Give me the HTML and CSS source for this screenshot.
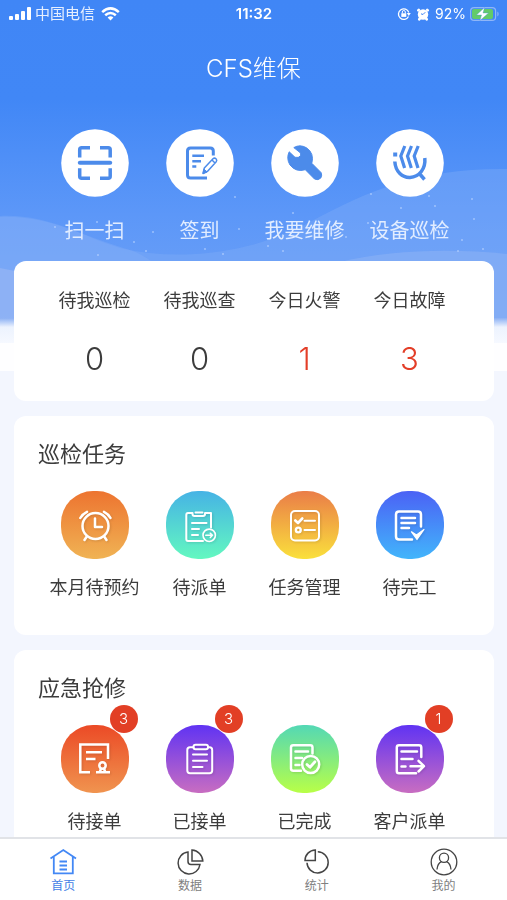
FILE: index.html
```html
<!DOCTYPE html>
<html lang="zh-CN">
<head>
<meta charset="utf-8">
<meta name="viewport" content="width=device-width, initial-scale=1">
<title>CFS维保</title>
<link rel="stylesheet" href="styles.css">
</head>
<body>
<div class="app">
  <main class="content">
    <svg class="scenery" viewBox="0 0 507 372" preserveAspectRatio="none" aria-hidden="true">
      <defs>
        <linearGradient id="sky" x1="0" y1="0" x2="0" y2="1">
          <stop offset="0" stop-color="#4086f6"/>
          <stop offset=".3" stop-color="#4187f6"/>
          <stop offset=".65" stop-color="#5c97f8"/>
          <stop offset="1" stop-color="#72a3f5"/>
        </linearGradient>
        <linearGradient id="snow" x1="0" y1="0" x2="0" y2="1">
          <stop offset="0" stop-color="#8bb0f4"/>
          <stop offset=".35" stop-color="#edf3fe"/>
          <stop offset="1" stop-color="#f6f9ff"/>
        </linearGradient>
      </defs>
      <rect width="507" height="330" fill="url(#sky)"/>
      <path d="M0 216C50 214 80 236 120 248C180 262 250 254 310 222C370 190 420 168 507 169V330H0Z" fill="#7facf7" fill-opacity=".4"/>
      <path d="M0 217C50 215 80 236 130 250C160 260 180 290 220 330H0Z" fill="#8ab2f7" fill-opacity=".3"/>
      <path d="M340 262C390 250 450 248 507 254V330H340Z" fill="#8ab0f5" fill-opacity=".6"/>
      <path d="M0 268L40 276V330H0Z" fill="#96b5f3" fill-opacity=".7"/>
      <rect y="318" width="507" height="26" fill="url(#snow)"/>
      <rect y="343" width="507" height="28" fill="#fefeff"/>
      <g fill="#c4dafd" fill-opacity=".6">
        <circle cx="55" cy="227" r="1"/><circle cx="97" cy="222" r="1"/><circle cx="134" cy="242" r="1"/><circle cx="146" cy="251" r="1"/><circle cx="98" cy="255" r="1"/>
        <circle cx="153" cy="232" r="1"/><circle cx="205" cy="249" r="1"/><circle cx="223" cy="254" r="1"/><circle cx="235" cy="197" r="1"/><circle cx="239" cy="229" r="1"/>
        <circle cx="268" cy="246" r="1"/><circle cx="283" cy="251" r="1"/><circle cx="293" cy="213" r="1"/><circle cx="346" cy="237" r="1"/><circle cx="371" cy="194" r="1"/>
        <circle cx="401" cy="208" r="1"/><circle cx="429" cy="196" r="1"/><circle cx="435" cy="206" r="1"/><circle cx="472" cy="199" r="1"/><circle cx="474" cy="219" r="1"/>
        <circle cx="462" cy="240" r="1"/><circle cx="458" cy="251" r="1"/><circle cx="483" cy="249" r="1"/><circle cx="368" cy="223" r="1"/>
      </g>
    </svg>

    <div class="status-bar">
      <div class="status-left">
        <svg width="22" height="14" viewBox="0 0 22 14" fill="#fff" aria-hidden="true"><rect y="9" width="4" height="4" rx="1"/><rect x="6" y="7" width="4" height="6" rx="1"/><rect x="12" y="4" width="4" height="9" rx="1"/><rect x="18" width="4" height="13" rx="1"/></svg>
        <span>中国电信</span>
        <svg class="wifi" width="19" height="14" viewBox="0 0 19 14" aria-hidden="true"><path d="M1.200 5.200Q9.500-2.400 17.800 5.200M4.200 8.300Q9.500 3.600 14.800 8.300" fill="none" stroke="#fff" stroke-width="2.500"/><path d="M6.600 10.500Q9.500 8 12.400 10.500L9.500 13.500Z" fill="#fff"/></svg>
      </div>
      <time class="status-time">11:32</time>
      <div class="status-right">
        <svg width="14" height="14" viewBox="0 0 14 14" fill="none" stroke="#fff" aria-hidden="true"><path d="M11.500 9.500A5.300 5.300 0 1 1 11.800 5.500" stroke-width="1.300"/><path d="M9.800 6h4L11.800 9Z" fill="#fff" stroke="none"/><rect x="4.300" y="6.300" width="5" height="3.600" fill="#fff" stroke="none"/><path d="M5.300 6.500V5a1.500 1.500 0 0 1 3 0v1.500"/></svg>
        <svg width="12" height="14" viewBox="0 0 12 14" aria-hidden="true"><path d="M1.800 2.800L1.300 3.300M10.200 2.800L10.700 3.300M2.800 11.500L2.300 12.300M9.200 11.500L9.700 12.300" stroke="#fff" stroke-width="2.600" stroke-linecap="round"/><circle cx="6" cy="7.500" r="5.200" fill="#fff"/><path d="M6 7.500L8.300 5.200M6 7.500L4 6.800" stroke="#4086f6"/></svg>
        <span>92%</span>
        <svg class="battery" width="29" height="14" viewBox="0 0 29 14" aria-hidden="true"><rect x=".6" y=".6" width="25" height="12.800" rx="3.500" fill="none" stroke="#8fb6f8" stroke-width="1.200"/><path d="M27.300 4.500v5q1.400-.8 1.400-2.500t-1.400-2.500Z" fill="#8fb6f8"/><rect x="2" y="2" width="21" height="10" rx="2" fill="#63cb69"/><path d="M14.500.5L6.500 8h5L10 13.500L18.500 6h-5.500Z" fill="#fff" stroke="#4f94dd" stroke-width=".4"/></svg>
      </div>
    </div>

    <h1 class="page-title">CFS维保</h1>

    <nav class="quick grid" aria-label="快捷功能">
      <a class="item" href="#scan">
        <svg class="icon" viewBox="0 0 68 68" fill="none" stroke="#4c8bea" stroke-width="3.500" aria-hidden="true"><circle cx="34" cy="34" r="33.800" fill="#fff" stroke="none"/><path d="M29 18.700H20.700Q18.700 18.700 18.700 20.700V28.500M39 18.700H47.200Q49.200 18.700 49.200 20.700V28.500M29 49.200H20.700Q18.700 49.200 18.700 47.200V39.300M39 49.200H47.200Q49.200 49.200 49.200 47.200V39.300"/><path d="M18.800 33.800H49.200" stroke-width="4" stroke-linecap="round"/></svg>
        <span>扫一扫</span>
      </a>
      <a class="item" href="#sign">
        <svg class="icon" viewBox="0 0 68 68" fill="none" stroke="#4c8bea" aria-hidden="true"><circle cx="34" cy="34" r="33.800" fill="#fff" stroke="none"/><path d="M47.300 26.500V22Q47.300 19 44.300 19H24.500Q21.500 19 21.500 22V46Q21.500 49 24.500 49H41" stroke-width="3"/><path d="M26.300 26.800H38M26.300 32.200H35M26.300 37.500H30.300" stroke-width="2.400"/><path d="M37 44.500L38.300 39L47 29.800Q48.500 28.500 50 29.800Q51.400 31.200 50.200 32.700L41.600 42.300ZM46 31L49 34" stroke-width="1.500" stroke-linejoin="round"/><path d="M37 44.500L38 40L41 43Z" fill="#4c8bea"/></svg>
        <span>签到</span>
      </a>
      <a class="item" href="#repair">
        <svg class="icon" viewBox="0 0 68 68" aria-hidden="true"><circle cx="34" cy="34" r="33.800" fill="#fff"/><path d="M22.800 18.600Q29 15 35.500 18.800Q43.500 24.300 40.800 34.300L50 43.500Q51.500 46 49.800 49Q47.200 51.800 43.500 50L34.300 40.700Q25 43.500 19 36Q15 29.500 18.200 22.800L24 28.300Q27.800 29.200 29.500 26.800Q30.300 24.700 28.700 23.300Z" fill="#4c8bea" stroke="#4c8bea" stroke-linejoin="round"/></svg>
        <span>我要维修</span>
      </a>
      <a class="item" href="#device">
        <svg class="icon" viewBox="0 0 68 68" fill="none" stroke="#4c8bea" stroke-width="3.500" aria-hidden="true"><circle cx="34" cy="34" r="33.800" fill="#fff" stroke="none"/><path d="M18.800 32.500C19.500 43 26.500 48.800 34 48.500C43.500 48 49.800 39.500 48.800 29M42.500 43.500L48.500 50.500"/><path d="M28.800 17L24.800 27L28.600 39M35.500 17L31.500 27L35.300 39M42.200 17L38.200 27L42 39" stroke-width="3.200"/><rect x="17.200" y="23.500" width="4" height="4" fill="#4c8bea" stroke="none"/></svg>
        <span>设备巡检</span>
      </a>
    </nav>

    <section class="card stats" aria-label="今日概况">
      <dl class="grid">
        <div class="stat"><dt>待我巡检</dt><dd>0</dd></div>
        <div class="stat"><dt>待我巡查</dt><dd>0</dd></div>
        <div class="stat alert"><dt>今日火警</dt><dd>1</dd></div>
        <div class="stat alert"><dt>今日故障</dt><dd>3</dd></div>
      </dl>
    </section>

    <section class="card tasks">
      <h2>巡检任务</h2>
      <div class="grid">
        <a class="item" href="#booking">
          <span class="disc amber"><svg class="icon line" viewBox="0 0 68 68" aria-hidden="true"><circle cx="34.500" cy="35" r="13"/><path d="M34 27.500V36H41M19.300 27Q21.500 23 26 20.800M43 20.800Q47.500 23 49.500 27M25.800 45.500L23.500 49M43.200 45.500L45.500 49"/></svg></span>
          <span>本月待预约</span>
        </a>
        <a class="item" href="#dispatch">
          <span class="disc aqua"><svg class="icon line thin" viewBox="0 0 68 68" aria-hidden="true"><path d="M45 36.500V22H39V23Q39 25 37 25H28.500Q26.500 25 26.500 23V22H22Q20.300 22 20.300 24V48Q20.300 50 22 50H37M29.500 21.500H36.500M26 32H40.500M26 38H33M26 44H32"/><circle cx="43.200" cy="44.300" r="6.200" stroke-width="1.600"/><path d="M39.800 44.300H46.500M44.300 42.200L46.500 44.300L44.300 46.500" stroke-width="1.500"/></svg></span>
          <span>待派单</span>
        </a>
        <a class="item" href="#manage">
          <span class="disc gold"><svg class="icon line thin" viewBox="0 0 68 68" aria-hidden="true"><rect x="20" y="20" width="28" height="29.500" rx="4"/><path d="M33.500 29.800H44M33.500 39H44"/><path d="M24.300 29.500L27 32L31.300 27.500" stroke-width="2.600"/><circle cx="27.300" cy="39" r="2.400" stroke-width="2.400"/></svg></span>
          <span>任务管理</span>
        </a>
        <a class="item" href="#finish">
          <span class="disc azure"><svg class="icon line" viewBox="0 0 68 68" aria-hidden="true"><path d="M45 35.500V23.500Q45 20.500 42 20.500H23Q20 20.500 20 23.500V45.500Q20 48.500 23 48.500H36M25.500 27H39M25.500 32H39M25.500 37H33"/><path d="M35.500 40.800L40.500 44L48 38.500L41 48.500Z" fill="#fff" stroke-width="1.200"/></svg></span>
          <span>待完工</span>
        </a>
      </div>
    </section>

    <section class="card tasks">
      <h2>应急抢修</h2>
      <div class="grid">
        <a class="item" href="#pending">
          <span class="disc coral"><svg class="icon line square" viewBox="0 0 68 68" aria-hidden="true"><path d="M47 34V19.500H19.300V47.300H29M25 27.300H41M25 34H34.500"/><path d="M35 47.300H49M40 43.500L39 46.500M43 43.500L44 46.500"/><circle cx="41.500" cy="40.500" r="3.200"/></svg><b class="badge">3</b></span>
          <span>待接单</span>
        </a>
        <a class="item" href="#accepted">
          <span class="disc violet"><svg class="icon line thin" viewBox="0 0 68 68" aria-hidden="true"><path d="M27.500 22.300H24Q21.300 22.300 21.300 25V45.500Q21.300 48.200 24 48.200H43.500Q46.200 48.200 46.200 45.500V25Q46.200 22.300 43.500 22.300H42"/><rect x="27.500" y="19.800" width="14.500" height="4.500" rx="2"/><path d="M27 29.500H41M27 35.800H41M27 42H36.500"/></svg><b class="badge">3</b></span>
          <span>已接单</span>
        </a>
        <a class="item" href="#completed">
          <span class="disc lime"><svg class="icon line" viewBox="0 0 68 68" aria-hidden="true"><path d="M41.500 28.500V22.500Q41.500 20.300 39.300 20.300H22.300Q20 20.300 20 22.500V43.500Q20 45.700 22.300 45.700H30M24.500 26.500H37M24.500 33H31M24.500 40H28.500"/><circle cx="39.700" cy="39.500" r="8.500"/><path d="M36 39.500L39 42.300L44 36.800" stroke-width="2.800"/></svg></span>
          <span>已完成</span>
        </a>
        <a class="item" href="#customer">
          <span class="disc violet"><svg class="icon line" viewBox="0 0 68 68" aria-hidden="true"><path d="M45.300 32V22.500Q45.300 20.300 43 20.300H23Q20.800 20.300 20.800 22.500V46Q20.800 48.300 23 48.300H40M25.500 26.500H41M25.500 34H36.500M25.500 41.500H29.500M34.500 41.200H47.500M42.500 35.800L48 41.200L42.500 46.500"/></svg><b class="badge">1</b></span>
          <span>客户派单</span>
        </a>
      </div>
    </section>
  </main>

  <nav class="tabs" aria-label="主导航">
    <a class="tab active" href="#home" aria-current="page">
      <svg viewBox="0 0 28 28" stroke-width="1.800" aria-hidden="true"><path d="M1.500 10.500L14.300 2L27 10.500M4.800 9V25.300H23.800V9M10.500 13.500H18M10.500 17.500H18M10.500 21.500H18"/></svg>
      <span>首页</span>
    </a>
    <a class="tab" href="#data">
      <svg viewBox="0 0 28 28" stroke-width="1.500" aria-hidden="true"><path d="M12 4A11 11 0 1 0 24 16.500H15Q12 16.500 12 13.500Z"/><path d="M16 2V13H26.800A11.500 11.500 0 0 0 16 2Z"/></svg>
      <span>数据</span>
    </a>
    <a class="tab" href="#report">
      <svg viewBox="0 0 28 28" stroke-width="1.500" aria-hidden="true"><path d="M14.800 3.800A10.600 10.600 0 1 1 4 14.800"/><path d="M12.300 2V12.500H2A10.500 10.500 0 0 1 12.300 2Z"/></svg>
      <span>统计</span>
    </a>
    <a class="tab" href="#me">
      <svg viewBox="0 0 28 28" stroke-width="1.300" aria-hidden="true"><circle cx="14" cy="14" r="12.800"/><circle cx="14" cy="9.800" r="4.600"/><path d="M7 21.500Q7.500 15.500 11.500 13.700M21 21.500Q20.500 15.500 16.500 13.700"/></svg>
      <span>我的</span>
    </a>
  </nav>
</div>
</body>
</html>
```

FILE: styles.css
```css
* { box-sizing: border-box; }

body {
  margin: 0;
  background: #f3f6fe;
  color: #3c3c3c;
  font-family: Inter, "Noto Sans CJK SC", sans-serif;
  font-weight: 400;
}

a { color: inherit; text-decoration: none; }
h1, h2, dl, dd { margin: 0; font-weight: inherit; }

.app {
  display: flex;
  flex-direction: column;
  height: 100vh;
}

.content {
  position: relative;
  flex: 1;
  min-height: 0;
  overflow-y: auto;
  scrollbar-width: none;
}

.scenery {
  position: absolute;
  top: 0;
  left: 0;
  z-index: -1;
  width: 100%;
  height: 372px;
}

/* Status bar */
.status-bar {
  display: grid;
  grid-template-columns: 1fr auto 1fr;
  align-items: center;
  height: 28px;
  padding: 0 8px 0 9px;
  color: #fff;
  font-size: 15px;
  line-height: 20px;
}

.status-left, .status-right { display: flex; align-items: center; gap: 4px; }
.status-left { color: #e6efff; }
.status-right { justify-content: flex-end; gap: 6px; font-size: 14px; }
.status-time { font-weight: 600; }
.wifi { margin-left: 2px; }
.battery { margin-left: -2px; }

.page-title {
  margin: 25px 0 44px;
  color: #fff;
  font-size: 24px;
  font-weight: 300;
  line-height: 32px;
  text-align: center;
}

/* Four-column rows */
.grid {
  display: grid;
  grid-template-columns: repeat(4, 1fr);
  padding: 0 32px 0 28px;
}

.item {
  display: flex;
  flex-direction: column;
  align-items: center;
  gap: 17px;
  font-size: 18px;
  line-height: 24px;
  white-space: nowrap;
}

.icon { display: block; width: 68px; height: 68px; }

.quick { margin: 0 13px 18px 14px; }
.quick .item { gap: 22px; color: #e2edff; font-size: 20px; }

/* Cards */
.card {
  margin: 0 13px 15px 14px;
  border-radius: 12px;
  background: #fff;
}

.stats { padding: 28px 0 22px; }
.stat { text-align: center; font-size: 18px; line-height: 24px; }
.stat dd { margin-top: 26px; font-size: 31px; font-weight: 300; line-height: 40px; }
.alert dd { color: #e33e28; }

.tasks { padding: 22px 0 35px; }
.tasks h2 {
  margin: 0 24px 21px;
  font-size: 22px;
  line-height: 32px;
}

.disc { position: relative; border-radius: 32px; }
.amber { background: linear-gradient(#ed7430, #f0b354); }
.aqua { background: linear-gradient(#46b3e5, #63f8c0); }
.gold { background: linear-gradient(#ea7d48, #fae03c); }
.azure { background: linear-gradient(#4b62f5, #42b5fb); }
.coral { background: linear-gradient(#eb4a26, #f0944f); }
.violet { background: linear-gradient(#6033f3, #c86dc1); }
.lime { background: linear-gradient(#53d8b5, #b8ff47); }

.line {
  fill: none;
  stroke: #fff;
  stroke-width: 2.5;
  stroke-linecap: round;
  stroke-linejoin: round;
  filter: drop-shadow(1px 1px 1px rgb(0 0 0 / 12%));
}
.thin { stroke-width: 2; }
.square { stroke-linecap: butt; stroke-linejoin: miter; }

.badge {
  position: absolute;
  top: -20px;
  left: 49px;
  width: 28px;
  border-radius: 50%;
  background: #e23f25;
  color: #fff;
  font-size: 15px;
  font-weight: 300;
  line-height: 28px;
  text-align: center;
}

/* Bottom navigation */
.tabs {
  display: grid;
  grid-template-columns: repeat(4, 1fr);
  border-top: 2px solid #e1e3e7;
  background: #fff;
}

.tab {
  display: flex;
  flex-direction: column;
  align-items: center;
  gap: 2px;
  padding: 9px 0 6px;
  color: #808080;
  font-size: 12px;
  line-height: 16px;
}

.tab svg {
  width: 28px;
  height: 28px;
  fill: none;
  stroke: #444;
}

.active { color: #4381e6; }
.active svg { stroke: #4388f5; }
```
